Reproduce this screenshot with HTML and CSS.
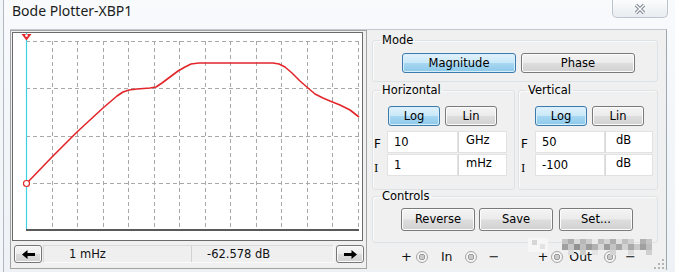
FILE: index.html
```html
<!DOCTYPE html>
<html>
<head>
<meta charset="utf-8">
<title>Bode Plotter-XBP1</title>
<link rel="stylesheet" href="styles.css">
</head>
<body>
<div class="frame">
  <div class="titlebar">
    <span class="title">Bode Plotter-XBP1</span>
    <div class="close">
      <svg width="14" height="12" viewBox="0 0 14 12">
        <path d="M3 2 L11 10 M11 2 L3 10" stroke="#7d8693" stroke-width="3.4" fill="none"/>
        <path d="M3 2 L11 10 M11 2 L3 10" stroke="#ffffff" stroke-width="1.4" fill="none"/>
      </svg>
    </div>
  </div>
  <div class="client">
    <div class="leftpane">
      <div class="plot">
        <svg width="349" height="207" viewBox="0 0 349 207">
          <g stroke="#a8a8a8" stroke-width="1" stroke-dasharray="4 3" fill="none">
            <path d="M39.5 8 V196 M64.5 8 V196 M90.5 8 V196 M115.5 8 V196 M141.5 8 V196 M166.5 8 V196 M192.5 8 V196 M217.5 8 V196 M243.5 8 V196 M268.5 8 V196 M294.5 8 V196 M319.5 8 V196 M345.5 8 V196"/>
            <path d="M13 8.5 H346 M13 55.5 H346 M13 103.5 H346 M13 150.5 H346"/>
          </g>
          <path d="M13 197 H346" stroke="#5a5a5a" stroke-width="2"/>
          <path d="M13.5 0 V196" stroke="#3ed2e2" stroke-width="1.2"/>
          <polyline fill="none" stroke="#e3262b" stroke-width="1.6" stroke-linejoin="round"
            points="13.5,150.5 39,124 64,99 90,75 104,63 110,59 116,57 124,56 137,55 143,54 149,50 157,44 165,38 172,34 178,31 186,30 260,30 266,31 272,34 279,40 287,48 295,55 302,61 310,65 317,68 327,72 337,77 346,84"/>
          <circle cx="13.5" cy="150.5" r="3" fill="#fff" stroke="#e3262b" stroke-width="1.2"/>
          <polygon points="8.5,1 18.5,1 13.5,7.5" fill="#e3262b"/>
          <circle cx="13.5" cy="2.6" r="1.3" fill="#fff"/>
        </svg>
      </div>
      <div class="readout">
        <button class="arrow">
          <svg width="13" height="9" viewBox="0 0 13 9"><path d="M0 4.5 L5.5 0 L5.5 3 L13 3 L13 6 L5.5 6 L5.5 9 Z" fill="#000"/></svg>
        </button>
        <div class="field">
          <span class="cell c1">1 mHz</span>
          <span class="cell c2">-62.578 dB</span>
        </div>
        <button class="arrow">
          <svg width="13" height="9" viewBox="0 0 13 9"><path d="M13 4.5 L7.5 0 L7.5 3 L0 3 L0 6 L7.5 6 L7.5 9 Z" fill="#000"/></svg>
        </button>
      </div>
    </div>

    <div class="rightpane">
      <fieldset class="group mode">
        <legend>Mode</legend>
        <div class="mode-row">
          <button class="btn on wide">Magnitude</button>
          <button class="btn wide">Phase</button>
        </div>
      </fieldset>

      <div class="axes">
        <fieldset class="group hgroup">
          <legend>Horizontal</legend>
          <div class="toggle-row">
            <button class="btn on small">Log</button>
            <button class="btn small">Lin</button>
          </div>
          <div class="inrow">
            <span class="lbl">F</span>
            <span class="inp val">10</span>
            <span class="inp unit">GHz</span>
          </div>
          <div class="inrow">
            <span class="lbl ilbl">I</span>
            <span class="inp val">1</span>
            <span class="inp unit">mHz</span>
          </div>
        </fieldset>
        <fieldset class="group vgroup">
          <legend>Vertical</legend>
          <div class="toggle-row">
            <button class="btn on small">Log</button>
            <button class="btn small">Lin</button>
          </div>
          <div class="inrow">
            <span class="lbl">F</span>
            <span class="inp val">50</span>
            <span class="inp unit">dB</span>
          </div>
          <div class="inrow">
            <span class="lbl ilbl">I</span>
            <span class="inp val">-100</span>
            <span class="inp unit">dB</span>
          </div>
        </fieldset>
      </div>

      <fieldset class="group controls">
        <legend>Controls</legend>
        <div class="ctrl-row">
          <button class="btn mid">Reverse</button>
          <button class="btn mid">Save</button>
          <button class="btn mid">Set...</button>
        </div>
      </fieldset>

      <div class="terminals">
        <span class="sym t1">+</span>
        <span class="term t2"></span>
        <span class="tlabel t3">In</span>
        <span class="term t4"></span>
        <span class="sym t5">&minus;</span>
        <span class="sym t6">+</span>
        <span class="term t7"></span>
        <span class="tlabel t8">Out</span>
        <span class="term t9"></span>
        <span class="sym t10">&minus;</span>
      </div>
    </div>

    <svg class="mosaic" width="130" height="30" viewBox="0 0 130 30">
      <rect x="0" y="2" width="20" height="14" fill="#f6f6f6"/>
      <rect x="4" y="4" width="5" height="5" fill="#d6d6d6"/>
      <rect x="12" y="8" width="5" height="5" fill="#e2e2e2"/>
      <rect x="34" y="3" width="6" height="5" fill="#c4c4c4"/>
      <rect x="40" y="3" width="6" height="5" fill="#acacac"/>
      <rect x="46" y="3" width="6" height="5" fill="#dadada"/>
      <rect x="52" y="3" width="6" height="5" fill="#b8b8b8"/>
      <rect x="58" y="3" width="6" height="5" fill="#cdcdcd"/>
      <rect x="64" y="3" width="6" height="5" fill="#eaeaea"/>
      <rect x="70" y="3" width="6" height="5" fill="#bcbcbc"/>
      <rect x="76" y="3" width="6" height="5" fill="#d4d4d4"/>
      <rect x="82" y="3" width="6" height="5" fill="#aeaeae"/>
      <rect x="88" y="3" width="6" height="5" fill="#e0e0e0"/>
      <rect x="94" y="3" width="6" height="5" fill="#c0c0c0"/>
      <rect x="100" y="3" width="6" height="5" fill="#d2d2d2"/>
      <rect x="112" y="3" width="6" height="5" fill="#b0b0b0"/>
      <rect x="118" y="3" width="6" height="5" fill="#c6c6c6"/>
      <rect x="34" y="8" width="6" height="6" fill="#a0a0a0"/>
      <rect x="40" y="8" width="6" height="6" fill="#c8c8c8"/>
      <rect x="46" y="8" width="6" height="6" fill="#929292"/>
      <rect x="52" y="8" width="6" height="6" fill="#c0c0c0"/>
      <rect x="58" y="8" width="6" height="6" fill="#9c9c9c"/>
      <rect x="64" y="8" width="6" height="6" fill="#b2b2b2"/>
      <rect x="70" y="8" width="6" height="6" fill="#d6d6d6"/>
      <rect x="76" y="8" width="6" height="6" fill="#9e9e9e"/>
      <rect x="82" y="8" width="6" height="6" fill="#c4c4c4"/>
      <rect x="88" y="8" width="6" height="6" fill="#a6a6a6"/>
      <rect x="94" y="8" width="6" height="6" fill="#d2d2d2"/>
      <rect x="100" y="8" width="6" height="6" fill="#aaaaaa"/>
      <rect x="106" y="8" width="6" height="6" fill="#cacaca"/>
      <rect x="112" y="8" width="6" height="6" fill="#a0a0a0"/>
      <rect x="118" y="8" width="6" height="6" fill="#bebebe"/>
      <rect x="40" y="14" width="6" height="5" fill="#dcdcdc"/>
      <rect x="52" y="14" width="6" height="5" fill="#cdcdcd"/>
      <rect x="64" y="14" width="6" height="5" fill="#e4e4e4"/>
      <rect x="82" y="14" width="6" height="5" fill="#d3d3d3"/>
      <rect x="100" y="14" width="6" height="5" fill="#dadada"/>
      <rect x="118" y="14" width="6" height="5" fill="#cfcfcf"/>
    </svg>

    <svg class="grip" width="12" height="12" viewBox="0 0 12 12">
      <g fill="#b5b5b5">
        <rect x="9" y="1" width="2" height="2"/>
        <rect x="5" y="5" width="2" height="2"/><rect x="9" y="5" width="2" height="2"/>
        <rect x="1" y="9" width="2" height="2"/><rect x="5" y="9" width="2" height="2"/><rect x="9" y="9" width="2" height="2"/>
      </g>
    </svg>
  </div>
</div>
</body>
</html>
```

FILE: styles.css
```css
html, body {
  margin: 0;
  padding: 0;
}

body {
  width: 675px;
  height: 272px;
  overflow: hidden;
  background: #f3f6f9;
  font-family: "DejaVu Sans", Verdana, sans-serif;
  font-size: 11.5px;
  color: #000;
}

.frame {
  height: 272px;
  margin-left: 3px;
  border-left: 1px solid #b2b9c1;
  padding-left: 6px;
  padding-right: 8px;
  box-sizing: border-box;
  display: flex;
  flex-direction: column;
  background: linear-gradient(#f8fafc, #eef2f6);
}

.titlebar {
  height: 29px;
  flex: none;
  display: flex;
  align-items: flex-start;
}

.title {
  font-family: "Noto Sans", "Open Sans", sans-serif;
  font-size: 14px;
  line-height: 19px;
  margin: 1px 0 0 2px;
  color: #1c1c1c;
}

.close {
  margin-left: auto;
  margin-right: -1px;
  width: 56px;
  height: 18px;
  box-sizing: border-box;
  border: 1px solid #bcc4cd;
  border-top: none;
  border-radius: 0 0 5px 5px;
  background: linear-gradient(#fbfcfd, #e8ecf0);
  display: flex;
  align-items: center;
  justify-content: center;
}

.client {
  position: relative;
  height: 240px;
  flex: none;
  background: #f0f0f0;
  border-top: 1px solid #c3c9cf;
  border-right: 1px solid #9ea6ae;
  display: flex;
  gap: 5px;
}

/* ---------- left pane: plot + readout ---------- */
.leftpane {
  width: 357px;
  height: 239px;
  box-sizing: border-box;
  border: 1px solid #a3a3a3;
  padding: 1px 2px 0 1px;
  display: flex;
  flex-direction: column;
}

.plot {
  width: 349px;
  height: 207px;
  border: 1px solid #6b6b6b;
  background: #fff;
}

.plot svg {
  display: block;
}

.readout {
  display: flex;
  height: 18px;
  margin: 4px 0 0 2px;
}

.arrow {
  width: 28px;
  height: 18px;
  padding: 0;
  border: 1px solid #767676;
  border-radius: 3px;
  background: linear-gradient(#f6f6f6 0%, #ececec 50%, #dcdcdc 50%, #d0d0d0 100%);
  box-shadow: inset 0 0 0 1px #fbfbfb;
  display: flex;
  align-items: center;
  justify-content: center;
}

.field {
  display: flex;
  width: 291px;
  margin: 0 2px 0 1px;
  box-sizing: border-box;
  border: 1px solid #dadada;
  border-right-color: #fafafa;
  border-bottom-color: #fafafa;
  background: #efefef;
}

.cell {
  line-height: 16px;
  font-size: 11.5px;
  color: #111;
}

.c1 {
  width: 147px;
  padding-left: 25px;
  box-sizing: border-box;
}

.c2 {
  flex: 1;
  border-left: 1px solid #d2d2d2;
  padding-left: 15px;
}

/* ---------- right pane ---------- */
.rightpane {
  width: 288px;
  padding: 4px 0 0 0;
  display: flex;
  flex-direction: column;
}

.group {
  margin: 0;
  padding: 0;
  min-width: 0;
  border: 1px solid #dde2e6;
  border-radius: 3px;
  box-shadow: inset 1px 1px 0 #fbfbfb;
}

.group legend {
  margin-left: 7px;
  padding: 0 2px;
  font-size: 11.5px;
  line-height: 13px;
  color: #000;
}

.mode {
  width: 286px;
  box-sizing: border-box;
  padding: 6px 0 8px 0;
}

.mode-row {
  display: flex;
  gap: 5px;
  padding-left: 29px;
}

.btn {
  height: 20px;
  padding: 0;
  border: 1px solid #7a7a7a;
  border-radius: 3px;
  background: linear-gradient(#f4f4f4 0%, #ebebeb 48%, #dddddd 52%, #d1d1d1 100%);
  box-shadow: inset 0 0 0 1px #fcfcfc;
  font-family: "DejaVu Sans", Verdana, sans-serif;
  font-size: 11.5px;
  line-height: 17px;
  color: #000;
}

.btn.on {
  border-color: #3d7bad;
  background: linear-gradient(#e1f2fb 0%, #c9e8f8 48%, #a7d7f1 52%, #8cc9ea 100%);
  box-shadow: inset 0 0 0 1px #d8eefb;
}

.wide {
  width: 114px;
}

.small {
  width: 52px;
}

.mid {
  width: 74px;
  height: 23px;
}

.axes {
  display: flex;
  gap: 3px;
  margin-top: 2px;
}

.hgroup {
  width: 143px;
  box-sizing: border-box;
  padding: 9px 0 12px 0;
}

.vgroup {
  width: 140px;
  box-sizing: border-box;
  padding: 9px 0 12px 0;
}

.toggle-row {
  display: flex;
  gap: 5px;
  margin-bottom: 5px;
}

.hgroup .toggle-row {
  padding-left: 15px;
}

.vgroup .toggle-row {
  padding-left: 16px;
}

.inrow {
  display: flex;
  height: 22px;
  margin-bottom: 1px;
}

.lbl {
  width: 14px;
  padding-left: 1px;
  box-sizing: border-box;
  line-height: 26px;
  font-size: 12px;
}

.vgroup .lbl {
  width: 16px;
  padding-left: 2px;
}

.ilbl {
  font-family: "DejaVu Serif", serif;
  font-size: 11px;
  line-height: 29px;
}

.inp {
  box-sizing: border-box;
  height: 22px;
  background: #fff;
  border: 1px solid #e2e2e2;
  line-height: 20px;
  color: #000;
}

.val {
  padding-left: 6px;
}

.unit {
  padding-left: 7px;
  border-left: 1px solid #d8d8d8;
  line-height: 16px;
}

.hgroup .val { width: 71px; }
.hgroup .unit { width: 49px; }
.vgroup .val { width: 70px; }
.vgroup .unit { width: 48px; padding-left: 10px; }

.controls {
  width: 286px;
  box-sizing: border-box;
  margin-top: 0;
  padding: 5px 0 11px 0;
}

.ctrl-row {
  display: flex;
  gap: 4px;
  padding-left: 28px;
}

.ctrl-row .btn:last-child {
  margin-left: 2px;
}

/* ---------- terminals ---------- */
.terminals {
  display: flex;
  align-items: center;
  height: 14px;
  margin-top: 7px;
  font-size: 12.5px;
  color: #111;
}

.sym {
  font-size: 13px;
  line-height: 14px;
}

.tlabel {
  line-height: 14px;
}

.term {
  width: 12px;
  height: 12px;
  box-sizing: border-box;
  border: 1px solid #a5a5a5;
  border-radius: 50%;
  background: radial-gradient(circle, #c9c9c9 0 2.5px, #9d9d9d 2.5px 3.5px, #f4f4f4 3.5px);
}

.t1 { margin-left: 29px; }
.t2 { margin-left: 4px; }
.t3 { margin-left: 13px; }
.t4 { margin-left: 12px; }
.t5 { margin-left: 12px; }
.t6 { margin-left: 38px; }
.t7 { margin-left: 3px; }
.t8 { margin-left: 6px; }
.t9 { margin-left: 12px; }
.t10 { margin-left: 9px; }

/* overlays */
.mosaic {
  position: absolute;
  left: 518px;
  top: 206px;
}

.grip {
  position: absolute;
  right: 1px;
  bottom: 0;
}
```
